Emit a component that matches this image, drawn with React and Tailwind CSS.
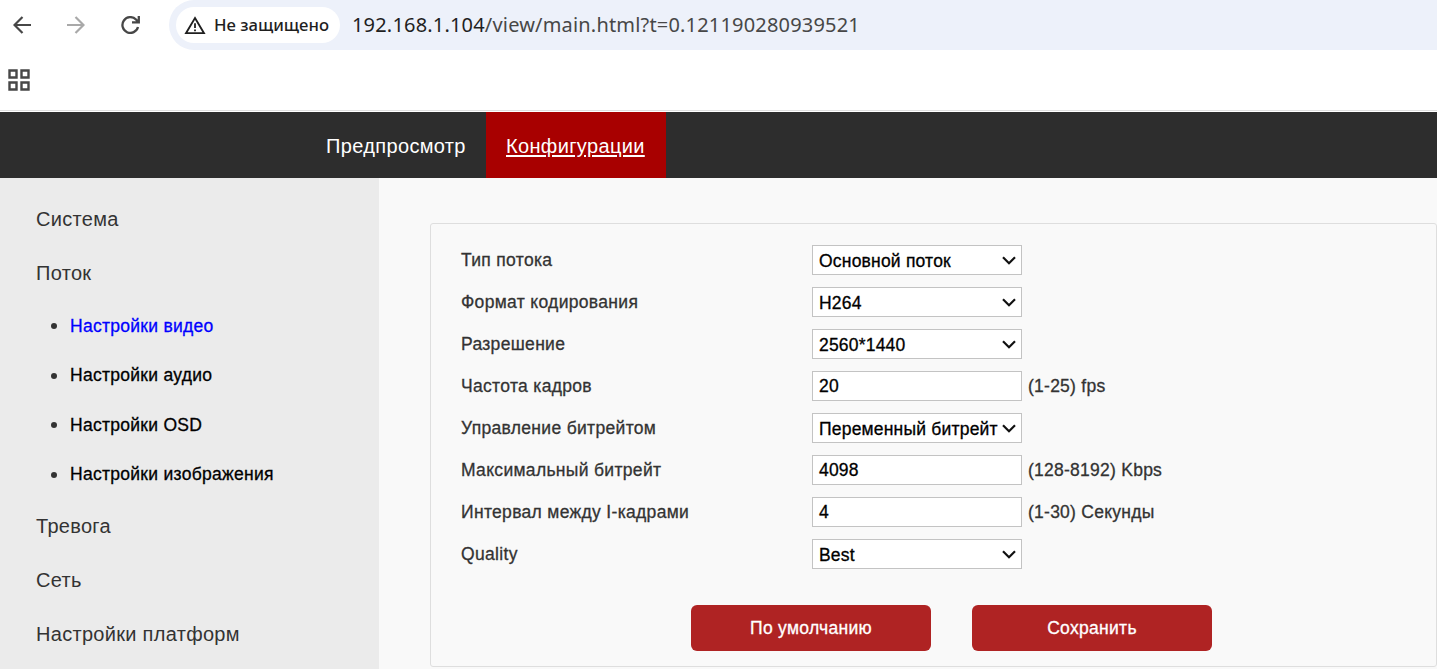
import React from 'react';

const menu = [
    { title: 'Система' },
    {
        title: 'Поток',
        items: ['Настройки видео', 'Настройки аудио', 'Настройки OSD', 'Настройки изображения'],
    },
    { title: 'Тревога' },
    { title: 'Сеть' },
    { title: 'Настройки платформ' },
];

const fields = [
    { label: 'Тип потока', type: 'select', value: 'Основной поток' },
    { label: 'Формат кодирования', type: 'select', value: 'H264' },
    { label: 'Разрешение', type: 'select', value: '2560*1440' },
    { label: 'Частота кадров', type: 'input', value: '20', hint: '(1-25) fps' },
    { label: 'Управление битрейтом', type: 'select', value: 'Переменный битрейт' },
    { label: 'Максимальный битрейт', type: 'input', value: '4098', hint: '(128-8192) Kbps' },
    { label: 'Интервал между I-кадрами', type: 'input', value: '4', hint: '(1-30) Секунды' },
    { label: 'Quality', type: 'select', value: 'Best' },
];

function BrowserBar() {
    return (
        <div className="h-[112px] bg-white flex flex-col">
            <div className="h-[50px] flex items-center">
                <div className="w-[169px] flex items-center shrink-0 pl-[13px] gap-[36px] text-[#474747]">
                    <svg width="18" height="18" viewBox="0 0 18 18" fill="none" stroke="currentColor" strokeWidth="2.2">
                        <path d="M18 9H1.5M9.5 1L1.5 9l8 8" />
                    </svg>
                    <svg width="18" height="18" viewBox="0 0 18 18" fill="none" stroke="#a9a9a9" strokeWidth="2.2">
                        <path d="M0 9h16.5M8.5 1l8 8-8 8" />
                    </svg>
                    <svg width="20" height="18" viewBox="0 0 20 18" fill="none" stroke="currentColor" strokeWidth="2.3">
                        <path d="M17 11A7.9 7.9 0 1 1 15 3.5L17 5.8M17.8 0v6.4H11" />
                    </svg>
                </div>
                <div className="flex-1 h-[50px] bg-[#edf1fa] rounded-l-full flex items-center pl-[7px]">
                    <div className="w-[164px] h-[36px] bg-white rounded-full flex items-center pl-[8px] mr-[12px] shrink-0">
                        <svg width="22" height="19" viewBox="0 0 22 19" className="mr-[8px] shrink-0" fill="none" stroke="#1f1f1f" strokeWidth="1.8">
                            <path d="M11 2L20 17.2H2z" />
                            <path d="M11 7.3v4.6M11 13.4v1.9" />
                        </svg>
                        <span className="text-[16.7px] leading-6 text-[#1f1f1f] font-medium whitespace-nowrap font-['Noto_Sans',sans-serif]">Не защищено</span>
                    </div>
                    <span className="text-[20px] leading-7 tracking-[0.18px] whitespace-nowrap text-[#474747] font-['Noto_Sans',sans-serif]">
                        <span className="text-[#1f1f1f]">192.168.1.104</span>/view/main.html?t=0.121190280939521
                    </span>
                </div>
            </div>
            <div className="h-[61px] border-b border-[#dedede] flex items-center pl-[8px]">
                <svg width="22" height="22" viewBox="0 0 22 22" fill="none" stroke="#474747" strokeWidth="2.4">
                    <path d="M1.5 1.5h7v7h-7zM13.5 1.5h7v7h-7zM1.5 13.5h7v7h-7zM13.5 13.5h7v7h-7z" />
                </svg>
            </div>
        </div>
    );
}

function Header() {
    return (
        <nav className="h-[66px] bg-[#2d2d2d] flex pl-[306px] text-[20px] text-white leading-[68px] tracking-[0.35px]">
            <a className="w-[180px] pl-[20px]">Предпросмотр</a>
            <a className="w-[180px] pl-[20px] bg-[#a80000] underline underline-offset-2">Конфигурации</a>
        </nav>
    );
}

function Sidebar() {
    return (
        <aside className="w-[379px] shrink-0 bg-[#ebebeb] pt-[14px] text-[#333]">
            {menu.map((section) => (
                <div key={section.title}>
                    <div className="h-[54px] pl-[36px] text-[20px] leading-[54px] tracking-[0.3px]">{section.title}</div>
                    {section.items && (
                        <ul className="pb-[1px]">
                            {section.items.map((item, i) => (
                                <li key={item} className="h-[49.6px] flex items-center pl-[51px] text-[17.5px] tracking-[0.28px] [-webkit-text-stroke:0.3px]">
                                    <span className="w-[6px] h-[6px] mt-[3px] rounded-full bg-[#333] mr-[13px]"></span>
                                    <a className={i === 0 ? 'pt-[2px] text-[#0000ff]' : 'pt-[2px] text-black'}>{item}</a>
                                </li>
                            ))}
                        </ul>
                    )}
                </div>
            ))}
        </aside>
    );
}

function Field({ label, type, value, hint }) {
    return (
        <div className="h-[42px] flex items-start">
            <label className="w-[351px] shrink-0 leading-[30px] tracking-[0.32px]">{label}</label>
            <div className="w-[210px] h-[30px] shrink-0 bg-white border border-[#c3c3c3] text-black flex items-center justify-between pl-[6px] pr-[5px] whitespace-nowrap">
                <span className={type === 'select' ? 'leading-[28px] pt-[2px] tracking-[0.2px]' : 'leading-[28px] tracking-[0.2px]'}>{value}</span>
                {type === 'select' && (
                    <svg width="14" height="9" viewBox="0 0 14 9" className="shrink-0" fill="none" stroke="#111" strokeWidth="2.2">
                        <path d="M1 1.2l6 6 6-6" />
                    </svg>
                )}
            </div>
            {hint && <span className="pl-[6px] leading-[30px] tracking-[0.25px]">{hint}</span>}
        </div>
    );
}

export default function App() {
    return (
        <div className="w-full h-[669px] overflow-hidden flex flex-col font-['Liberation_Sans',Arial,sans-serif]">
            <BrowserBar />
            <Header />
            <div className="flex-1 flex bg-[#f9f9f9]">
                <Sidebar />
                <main className="flex-1 pl-[51px] pt-[45px]">
                    <div className="h-[444px] border border-[#dedede] rounded-[3px] pl-[30px] pt-[21px] text-[17.5px] text-[#333] [-webkit-text-stroke:0.3px]">
                        {fields.map((field) => (
                            <Field key={field.label} {...field} />
                        ))}
                        <div className="flex gap-[41px] pl-[230px] pt-[24px] tracking-[0.3px]">
                            <button className="w-[240px] h-[46px] rounded-[6px] bg-[#af2323] text-white">По умолчанию</button>
                            <button className="w-[240px] h-[46px] rounded-[6px] bg-[#af2323] text-white">Сохранить</button>
                        </div>
                    </div>
                </main>
            </div>
        </div>
    );
}
